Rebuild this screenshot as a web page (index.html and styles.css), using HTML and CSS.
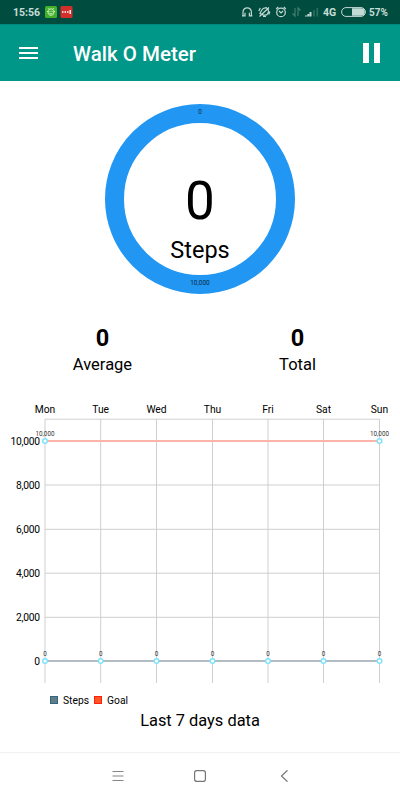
FILE: index.html
```html
<!DOCTYPE html>
<html lang="en">
<head>
<meta charset="utf-8">
<title>Walk O Meter</title>
<link rel="stylesheet" href="styles.css">
</head>
<body>
<div class="status">
  <span class="time">15:56</span>
  <svg class="notes" width="28" height="12" viewBox="0 0 28 12">
    <rect width="12" height="12" rx="1.5" fill="#43b02a"/>
    <path d="M3.2 5.4C3.2 2 8.8 2 8.8 5.4V7C8.8 10 3.2 10 3.2 7ZM3 2.2l1.4 1.4M9 2.2L7.6 3.6M2 5.5h1.2M8.8 5.5H10M4.5 7.3q1.5 1.2 3 0" fill="none" stroke="#d8f5d0" stroke-width=".9"/>
    <path d="M4.5 5.4h1M6.6 5.4h1" stroke="#d8f5d0"/>
    <rect x="15.500" width="12" height="12" rx="1.5" fill="#d32f2a"/>
    <path d="M17 6h1.500M19.500 6H21M22 6h1.500M25.200 4v4" stroke="#fff" stroke-width="1.4"/>
  </svg>
  <svg class="indicators" width="78" height="14" viewBox="242 5 78 14" fill="none" stroke="#c3d9d3" stroke-width="1.2">
    <path d="M244 15.500V12a4.200 4.200 0 0 1 8.400 0v3.500M243 15.800h3v-3M253.400 15.800h-3v-3"/>
    <path d="M261 13.500l1.200-2.500 2-2.500 3-.8 2 1.500.2 3-1.400 2.500-3 .6ZM259.800 11l1.500-3M270.800 11.500l-1 3M260.500 16.500L270 7.500M264 16.500h3"/>
    <circle cx="282" cy="12.400" r="4.300"/><path d="M277.200 9l2-2M286.800 9l-2-2M280 11l2 2 2-2"/>
    <path d="M296 8v8l-2.500-2.500M299 16V8l2.500 2.500" stroke="#417d70"/>
    <path d="M307 16.500v-1M309.300 16.500v-2.500M311.500 16.500v-4.500" stroke-width="2"/>
    <path d="M315 16.500V10M318.300 16.500V8" stroke="#2c6e61" stroke-width="1.600"/>
  </svg>
  <span class="network">4G</span>
  <svg class="battery" width="25" height="10" viewBox="0 0 25 10">
    <rect x=".6" y=".6" width="23.800" height="8.800" rx="4.400" fill="none" stroke="#c3d9d3"/>
    <path d="M11 1.200h9a3.800 3.800 0 0 1 0 7.600h-9Z" fill="#c3d9d3"/>
  </svg>
  <span class="percent">57%</span>
</div>
<header class="appbar">
  <svg class="menu" width="19" height="12" viewBox="0 0 19 12"><path d="M0 1h19M0 6h19M0 11h19" stroke="#fff" stroke-width="2"/></svg>
  <h1>Walk O Meter</h1>
  <svg class="pause" width="17" height="20" viewBox="0 0 17 20"><path d="M0 0h6v20H0ZM11 0h6v20h-6Z" fill="#fff"/></svg>
</header>
<main>
  <section class="ring">
    <span class="mark">0</span>
    <span class="count">0</span>
    <span class="unit">Steps</span>
    <span class="mark goal">10,000</span>
  </section>
  <section class="totals">
    <div><strong>0</strong><span>Average</span></div>
    <div><strong>0</strong><span>Total</span></div>
  </section>
  <svg class="chart" width="400" height="292" viewBox="0 398 400 292">
    <path d="M45 419.200H379.500M45 485H379.500M45 529.300H379.500M45 573.200H379.500M45 617.300H379.500M45 419V683M100.700 419V683M156.500 419V683M212.500 419V683M268 419V683M323.500 419V683M379.500 419V683" fill="none" stroke="#cfcfcf"/>
    <path d="M45 441H379.500" stroke="#ffb4a9" stroke-width="2"/>
    <path d="M45 661H379.500" stroke="#b5bbc3" stroke-width="1.800"/>
    <g class="days">
      <text x="45" y="412.500">Mon</text><text x="100.700" y="412.500">Tue</text><text x="156.500" y="412.500">Wed</text><text x="212.500" y="412.500">Thu</text><text x="268" y="412.500">Fri</text><text x="323.500" y="412.500">Sat</text><text x="379.500" y="412.500">Sun</text>
    </g>
    <g class="scale">
      <text x="40" y="444.500" textLength="29.500">10,000</text><text x="40" y="488.500" textLength="24">8,000</text><text x="40" y="532.500" textLength="24">6,000</text><text x="40" y="576.500" textLength="24">4,000</text><text x="40" y="620.500" textLength="24">2,000</text><text x="40" y="664.500">0</text>
    </g>
    <g class="values">
      <text x="45" y="436">10,000</text><text x="379.500" y="436">10,000</text>
      <text x="45" y="656">0</text><text x="100.700" y="656">0</text><text x="156.500" y="656">0</text><text x="212.500" y="656">0</text><text x="268" y="656">0</text><text x="323.500" y="656">0</text><text x="379.500" y="656">0</text>
    </g>
    <g fill="#fff" stroke="#7fe3fb" stroke-width="1.500">
      <circle cx="45" cy="441" r="2.300"/><circle cx="379.500" cy="441" r="2.300"/>
      <circle cx="45" cy="661" r="2.300"/><circle cx="100.700" cy="661" r="2.300"/><circle cx="156.500" cy="661" r="2.300"/><circle cx="212.500" cy="661" r="2.300"/><circle cx="268" cy="661" r="2.300"/><circle cx="323.500" cy="661" r="2.300"/><circle cx="379.500" cy="661" r="2.300"/>
    </g>
  </svg>
  <div class="legend"><i class="steps"></i><span>Steps</span><i class="target"></i><span>Goal</span></div>
  <p class="caption">Last 7 days data</p>
</main>
<nav>
  <svg width="12" height="12" viewBox="0 0 12 12"><path d="M.5 1.500h11M.5 6h11M.5 10.500h11" stroke="#858585"/></svg>
  <svg width="12" height="12" viewBox="0 0 12 12"><rect x=".6" y=".6" width="10.800" height="10.800" rx="2.200" fill="none" stroke="#777" stroke-width="1.200"/></svg>
  <svg width="12" height="12" viewBox="0 0 12 12"><path d="M9.500 .3L3.500 6 9.500 11.700" fill="none" stroke="#777" stroke-width="1.200"/></svg>
</nav>
</body>
</html>
```
FILE: styles.css
```css
* { box-sizing: border-box; }
body { margin: 0; width: 400px; height: 800px; display: flex; flex-direction: column; overflow: hidden; background: #fff; color: #000; font-family: Roboto, "Liberation Sans", sans-serif; }
.status { height: 24px; flex: none; display: flex; align-items: center; padding: 0 13px; background: #004d40; color: #c9ddd8; font-size: 10.5px; font-weight: 700; }
.time { width: 32px; }
.indicators { margin-left: auto; }
.network { width: 14px; margin-left: 4px; }
.battery { margin-left: 4px; }
.percent { width: 18px; margin-left: 3px; font-size: 10px; }
.appbar { height: 57px; flex: none; display: flex; align-items: center; padding: 0 20px 0 19px; background: #009688; color: #fff; border-top: 1px solid #00897b; }
.menu { margin-top: -1px; }
h1 { flex: 1; margin: 2px 0 0 35px; font-size: 20.5px; line-height: 28px; font-weight: 500; }
main { height: 671px; flex: none; }
.ring { width: 190px; height: 190px; margin: 23px auto 0; border: 19px solid #2196f3; border-radius: 50%; display: flex; flex-direction: column; align-items: center; }
.mark { flex: none; height: 8px; margin-top: -15px; font-size: 6.5px; line-height: 8px; color: #102c45; }
.count { height: 56px; margin-top: 57px; font-size: 53px; line-height: 56px; }
.unit { height: 28px; margin-top: 7px; font-size: 23.5px; line-height: 28px; }
.goal { margin-top: 15px; }
.totals { display: grid; grid-template-columns: 195px 195px; padding: 29px 5px 0; text-align: center; height: 104px; }
.totals div { display: flex; flex-direction: column; }
.totals strong { font-size: 23.5px; line-height: 30px; font-weight: 700; }
.totals span { font-size: 16.5px; line-height: 24px; }
.chart { display: block; }
.chart text { font-family: Roboto, "Liberation Sans", sans-serif; font-size: 10.3px; }
.days text, .values text { text-anchor: middle; }
.scale text { text-anchor: end; }
.chart .values text { font-size: 6.3px; fill: #333; }
.legend { display: flex; align-items: center; height: 20px; padding-left: 50px; font-size: 10.3px; }
.legend i { width: 8px; height: 8px; margin-right: 5px; border: 1px solid; }
.legend span { margin-right: 5px; }
.legend .steps { background: #607d8b; border-color: #34657f; }
.legend .target { background: #ff5722; border-color: #ff1f0c; }
.caption { margin: 0; text-align: center; font-size: 16.4px; line-height: 21px; }
nav { height: 48px; flex: none; display: flex; justify-content: space-between; align-items: center; padding: 0 110px 2px; border-top: 1px solid #f1f1f1; }
nav svg:first-child { margin-left: 2px; }
nav svg:nth-child(2) { margin-left: -2px; }
```
